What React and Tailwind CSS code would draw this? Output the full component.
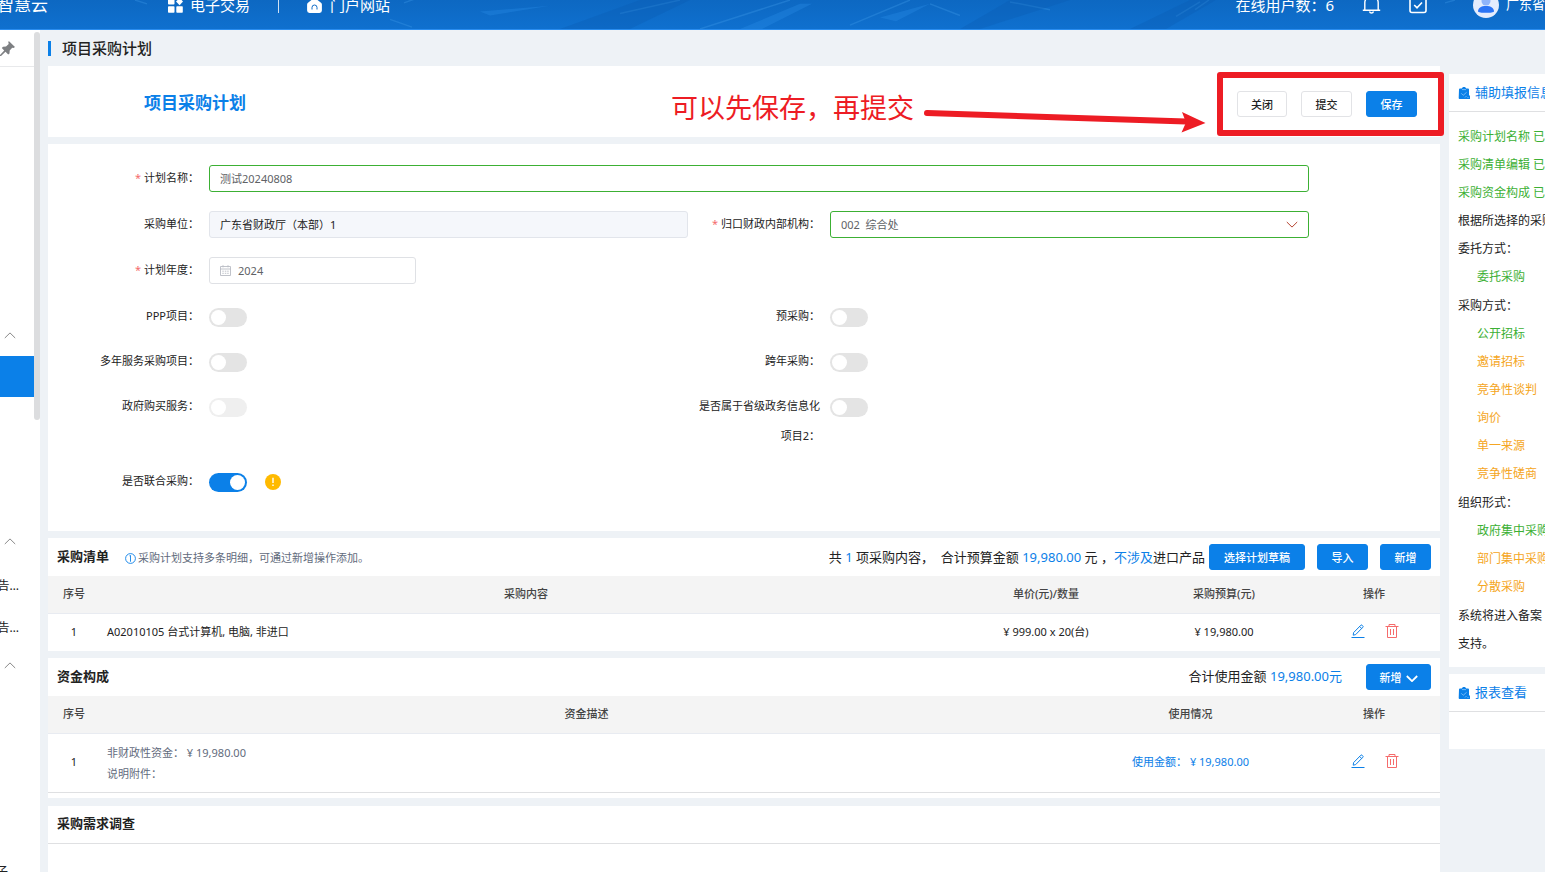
import React from "react";

function Chevron({ className, up, width = 1 }) {
  return (
    <svg className={className} viewBox="0 0 12 7" fill="none" stroke="currentColor" strokeWidth={width} aria-hidden="true">
      <path d={up ? "M0.8 6 6 0.9 11.2 6" : "M0.8 1 6 6.1 11.2 1"} />
    </svg>
  );
}

function EditIcon() {
  return (
    <svg className="h-3.5 w-3.5" viewBox="0 0 14 14" fill="none" stroke="#0b80e8" strokeWidth="1" aria-hidden="true">
      <path d="M0.5 13.5h13" />
      <path d="M2.2 11.2 2.6 8.6 9.9 1.2a.8.8 0 0 1 1.1 0l.9.9a.8.8 0 0 1 0 1.1L4.7 10.6Z" />
      <path d="m8.7 2.5 2 2" />
    </svg>
  );
}

function TrashIcon() {
  return (
    <svg className="h-3.5 w-3.5" viewBox="0 0 14 14" fill="none" stroke="#f56c6c" strokeWidth="1" aria-hidden="true">
      <path d="M0.5 2.5h13M4 2.5v-2h6v2M2.5 2.5v11h9v-11M5.5 5v6M8.5 5v6" />
    </svg>
  );
}

function ClipboardIcon() {
  return (
    <svg className="h-3 w-3 shrink-0" viewBox="0 0 12 12" aria-hidden="true">
      <path d="M2 1.500h1.800C4 .6 4.800 0 6 0s2 .6 2.200 1.500H10a1 1 0 0 1 1 1V8l1 1v3H1.500A1 1 0 0 1 .7 11L1 2.500a1 1 0 0 1 1-1Z" fill="#0b80e8" />
      <path d="M4 2.600h4M3.200 6.300l2 2 3.400-3M7 10.500l1.500-1.500M9.500 10.500h1" stroke="#9fd0fb" strokeWidth=".7" fill="none" />
    </svg>
  );
}

function Button({ primary, className = "w-[51px]", children }) {
  const tone = primary
    ? "border-[#0b80e8] bg-[#0b80e8] text-white"
    : "border-[#e2e3e6] bg-white text-[#222]";
  return (
    <button type="button" className={`flex h-[26px] shrink-0 items-center justify-center gap-1 rounded-[3px] border pt-0.5 text-[11px] font-medium ${tone} ${className}`}>
      {children}
    </button>
  );
}

function Header() {
  return (
    <header className="relative flex h-[30px] shrink-0 items-end overflow-hidden border-b border-[#2a8df0] bg-linear-to-b from-[#0d68c2] to-[#0f70cf] text-[15px] text-white">
      <svg className="absolute inset-0 h-full w-full" viewBox="0 0 1545 30" preserveAspectRatio="none" fill="none" aria-hidden="true">
        <g stroke="#3f9be8" strokeOpacity=".35" strokeWidth="1.500">
          <path d="M135 0l12 4M390 20l22 8M404 3l16-6M620 14l60-14M700 30l90-30M850 26l60-26M930 4l30 12M1010 2l40 8M1176 17l24-15M1195 10l14-10M1445 3l10-3" />
        </g>
        <g fill="#0a5bb0" fillOpacity=".3">
          <path d="M560 30 640 0h50l-60 30ZM960 30l50-30h60l-90 30ZM1130 30l60-30h26l-50 30Z" />
        </g>
        <g fill="#2f93ec" fillOpacity=".3">
          <path d="M480 12l70-6-60 10ZM740 30l60-26 12 0-50 26ZM880 18l50-14-34 18Z" />
        </g>
      </svg>
      <div className="relative flex h-12 w-full shrink-0 items-center whitespace-nowrap">
        <span className="-ml-[3px] w-[171px] shrink-0 text-[17px]">智慧云</span>
        <a href="#trade" className="flex items-center gap-[7px]">
          <svg className="h-[15px] w-[15px]" viewBox="0 0 15 15" fill="#fff" aria-hidden="true">
            <rect x="0" y="0" width="6.500" height="6.500" rx=".8" />
            <rect x="0" y="8.300" width="6.500" height="6.500" rx=".8" />
            <rect x="8.300" y="8.300" width="6.500" height="6.500" rx=".8" />
            <path d="M11.600 7.200 8 3.500 11.600 0l3.500 3.500Z" />
          </svg>
          电子交易
        </a>
        <span className="mx-7 h-4 w-px bg-white/80" />
        <a href="#portal" className="flex items-center gap-2">
          <svg className="h-[15px] w-[15px]" viewBox="0 0 15 15" aria-hidden="true">
            <path d="M6.200.6a2 2 0 0 1 2.600 0l5.200 4.200c.6.500.9 1.100.9 1.800V12.500a2.400 2.400 0 0 1-2.400 2.400H2.500A2.400 2.400 0 0 1 .1 12.500V6.600c0-.7.3-1.300.9-1.800Z" fill="#fff" />
            <path d="M5 11.500V9.500a2.500 2.500 0 0 1 5 0v2" fill="none" stroke="#0e6cc8" strokeWidth="1" />
          </svg>
          门户网站
        </a>
        <span className="ml-auto">在线用户数：6</span>
        <button type="button" aria-label="消息" className="ml-7">
          <svg className="h-[19px] w-[19px]" viewBox="0 0 19 19" fill="none" stroke="#fff" strokeWidth="1.400" aria-hidden="true">
            <path d="M.8 14.200h17.400M2.800 14V6.800a6.700 6.700 0 0 1 13.400 0V14M7.500 15.500a2.100 2.100 0 0 0 4 0" />
          </svg>
        </button>
        <button type="button" aria-label="待办" className="ml-7">
          <svg className="h-[18px] w-[18px]" viewBox="0 0 18 18" fill="none" stroke="#fff" strokeWidth="1.600" aria-hidden="true">
            <path d="M1 2.500h16v12a2 2 0 0 1-2 2H3a2 2 0 0 1-2-2ZM5.200 9l2.800 2.800 5-5.300" />
          </svg>
        </button>
        <a href="#user" className="ml-[46px] flex w-[72px] items-center gap-[7px] overflow-hidden text-[13px]">
          <svg className="h-[26px] w-[26px] shrink-0" viewBox="0 0 26 26" aria-hidden="true">
            <circle cx="13" cy="13" r="13" fill="#e4ecfd" />
            <circle cx="13" cy="9" r="4.500" fill="#8fb4fb" />
            <path d="M5 19.500c0-3.500 3-5.500 8-5.500s8 2 8 5.500c0 1.800-16 1.800-16 0Z" fill="#2b74f5" />
          </svg>
          广东省
        </a>
      </div>
    </header>
  );
}

function SideMenu() {
  return (
    <nav aria-label="菜单" className="flex w-10 shrink-0 overflow-hidden bg-white">
      <div className="flex w-[34px] shrink-0 flex-col text-[12px] text-[#222]">
        <div className="flex h-[37px] shrink-0 items-center border-b border-[#e8e9eb]">
          <svg className="h-[15px] w-[15px]" viewBox="0 0 15 15" fill="#7d7f82" aria-hidden="true">
            <path d="M8.800 0 15 6l-1.500 1-1.300-.3-2.500 2.800-.2 3L8.200 13.500 5.500 10.800 1 15H0v-1l4.200-4.500L1.800 7 3 5.700l3-.2L8.700 3 8.300 1.300Z" />
          </svg>
        </div>
        <div className="mt-[252px] flex h-8 shrink-0 items-center pl-1"><Chevron up className="h-[7px] w-3 text-[#888]" /></div>
        <a href="#plan" aria-label="项目采购计划" aria-current="page" className="mt-[5px] h-[41px] shrink-0 bg-[#0b80e8]" />
        <div className="mt-32 flex h-8 shrink-0 items-center pl-1"><Chevron up className="h-[7px] w-3 text-[#888]" /></div>
        <a href="#notice-a" className="mt-2 flex h-[42px] shrink-0 items-center justify-end overflow-hidden whitespace-nowrap pr-[15px]">告…</a>
        <a href="#notice-b" className="flex h-[42px] shrink-0 items-center justify-end overflow-hidden whitespace-nowrap pr-[15px]">告…</a>
        <div className="flex h-8 shrink-0 items-center pl-1"><Chevron up className="h-[7px] w-3 text-[#888]" /></div>
        <a href="#more" className="mt-[170px] flex h-[42px] shrink-0 items-center justify-end pr-[26px]">子</a>
      </div>
      <div className="mt-0.5 h-[388px] w-1.5 rounded-full bg-[#dcdddf]" />
    </nav>
  );
}

function Field({ label, id, required, wide, children }) {
  return (
    <div className={`flex items-start ${wide ? "col-span-2" : ""}`}>
      <label htmlFor={id} className="mr-2.5 w-[132px] shrink-0 pl-2 text-right leading-[30px] text-[#222]">
        {required && <span className="mr-[3px] text-[#f56c6c]">*</span>}
        {label}：
      </label>
      <div className="flex min-w-0 flex-1">{children}</div>
    </div>
  );
}

function Switch({ id, on, disabled }) {
  return (
    <input
      id={id}
      type="checkbox"
      role="switch"
      defaultChecked={on}
      disabled={disabled}
      className="mt-[7px] flex h-[19px] w-[38px] shrink-0 appearance-none items-center rounded-full bg-[#e4e4e4] px-0.5 before:block before:h-[15px] before:w-[15px] before:rounded-full before:bg-white before:content-[''] checked:justify-end checked:bg-[#0b80e8] disabled:bg-[#efefef]"
    />
  );
}

function TitlePanel() {
  return (
    <section className="relative flex h-[71px] items-center bg-white pl-24 pr-[23px]">
      <h1 className="mt-0.5 text-[17px] font-bold text-[#0b80e8]">项目采购计划</h1>
      <div className="absolute right-[234px] top-6 flex items-start whitespace-nowrap">
        <span className="mr-2.5 text-[27px] leading-9 text-[#ed1c24]">可以先保存，再提交</span>
        <svg className="mt-[19px] h-[26px] w-[282px]" viewBox="0 0 282 26" aria-hidden="true">
          <path d="M3 4 262 12.500" stroke="#ed1c24" strokeWidth="6" strokeLinecap="round" />
          <path d="M258 3 281.500 14 257.500 23.500 262 13.500Z" fill="#ed1c24" />
        </svg>
      </div>
      <div className="relative ml-auto mt-[5px] flex gap-[14px]">
        <Button className="w-[50px]">关闭</Button>
        <Button>提交</Button>
        <Button primary>保存</Button>
        <div className="pointer-events-none absolute -bottom-[19px] -left-5 -right-[27px] -top-[19px] z-10 rounded-[3px] border-6 border-[#ed1c24]" />
      </div>
    </section>
  );
}

function PlanForm() {
  const box = "h-[27px] w-full rounded-[3px] border px-2.5 text-[11px] outline-none";
  return (
    <form className="mt-[7px] bg-white pb-[35px] pl-[19px] pr-[131px] pt-[19px] text-[11px]">
      <div className="grid grid-cols-2 gap-y-4">
        <Field label="计划名称" id="name" required wide>
          <input id="name" defaultValue="测试20240808" className={`${box} mt-0.5 border-[#3cb034] pb-0.5 text-[#606266]`} />
        </Field>
        <Field label="采购单位" id="unit">
          <input id="unit" readOnly value="广东省财政厅（本部）1" className={`${box} mt-0.5 border-[#e2e5eb] bg-[#f5f7fb] pb-0.5 text-[#222]`} />
        </Field>
        <Field label="归口财政内部机构" id="org" required>
          <div className="relative mt-0.5 flex w-full items-center">
            <select id="org" className={`${box} appearance-none border-[#3cb034] bg-white pt-0.5 text-[#606266]`}>
              <option>{"002\u00a0 综合处"}</option>
            </select>
            <Chevron className="pointer-events-none absolute right-[11px] h-[7px] w-3 text-[#b5432f]" />
          </div>
        </Field>
        <Field label="计划年度" id="year" required wide>
          <div className="mt-0.5 flex h-[27px] w-[207px] items-center gap-[7px] rounded-[3px] border border-[#dfe1e5] px-2.5">
            <svg className="h-[11px] w-[11px] shrink-0" viewBox="0 0 11 11" fill="none" stroke="#b9bcc4" strokeWidth=".9" aria-hidden="true">
              <path d="M.5 1.500h10v9H.5ZM.5 4h10M3 .2v2.200M8 .2v2.200M2.300 6.200h1.500M4.800 6.200h1.500M7.200 6.200h1.500M2.300 8.300h1.500M4.800 8.300h1.500M7.200 8.300h1.500" />
            </svg>
            <input id="year" defaultValue="2024" className="w-full min-w-0 pt-0.5 text-[#606266] outline-none" />
          </div>
        </Field>
      </div>
      <div className="mt-4 grid grid-cols-2 gap-y-[15px]">
        <Field label="PPP项目" id="ppp"><Switch id="ppp" /></Field>
        <Field label="预采购" id="pre"><Switch id="pre" /></Field>
        <Field label="多年服务采购项目" id="multi"><Switch id="multi" /></Field>
        <Field label="跨年采购" id="cross"><Switch id="cross" /></Field>
        <Field label="政府购买服务" id="service"><Switch id="service" disabled /></Field>
        <Field label="是否属于省级政务信息化项目2" id="it"><Switch id="it" /></Field>
        <Field label="是否联合采购" id="joint" wide>
          <Switch id="joint" on />
          <svg className="ml-[18px] mt-2 h-4 w-4" viewBox="0 0 16 16" aria-hidden="true">
            <circle cx="8" cy="8" r="8" fill="#ffba00" />
            <path d="M8 3.800v5.200M8 10.500v1.600" stroke="#fff" strokeWidth="1.400" />
          </svg>
        </Field>
      </div>
    </form>
  );
}

function HeadRow({ columns }) {
  return (
    <thead>
      <tr className="h-[37px] border-b border-[#e8ebf1] bg-[#f4f4f4] text-[#444]">
        {columns.map((c) => (
          <th key={c} scope="col" className="p-0 text-center font-medium">{c}</th>
        ))}
      </tr>
    </thead>
  );
}

function RowActions() {
  return (
    <div className="flex items-center justify-center gap-5 pb-[3px] pl-px">
      <button type="button" aria-label="编辑"><EditIcon /></button>
      <button type="button" aria-label="删除"><TrashIcon /></button>
    </div>
  );
}

function ItemList() {
  return (
    <section className="mt-[7px] bg-white">
      <div className="flex h-[38px] items-center whitespace-nowrap pl-[9px] pr-[9px]">
        <h2 className="text-[13px] font-bold text-[#222]">采购清单</h2>
        <p className="ml-4 mt-0.5 flex items-center gap-0.5 text-[11px] text-[#626b7c]">
          <svg className="h-[11px] w-[11px]" viewBox="0 0 11 11" fill="none" stroke="#0b80e8" strokeWidth=".9" aria-hidden="true">
            <circle cx="5.500" cy="5.500" r="4.900" />
            <path d="M5.500 2.300v6.400M4.500 2.800h1" />
          </svg>
          采购计划支持多条明细，可通过新增操作添加。
        </p>
        <p className="ml-auto mr-1 pt-0.5 text-[13px] text-[#222]">
          共 <span className="text-[#0b80e8]">1</span> 项采购内容，{"\u00a0 "}合计预算金额 <span className="text-[#0b80e8]">19,980.00</span> 元 ，<span className="text-[#0b80e8]">不涉及</span>进口产品
        </p>
        <div className="flex gap-3">
          <Button primary className="w-24">选择计划草稿</Button>
          <Button primary>导入</Button>
          <Button primary>新增</Button>
        </div>
      </div>
      <table className="w-full table-fixed border-collapse text-[11px] text-[#222]">
        <colgroup>
          <col className="w-[52px]" />
          <col />
          <col className="w-[188px]" />
          <col className="w-[168px]" />
          <col className="w-[132px]" />
        </colgroup>
        <HeadRow columns={["序号", "采购内容", "单价(元)/数量", "采购预算(元)", "操作"]} />
        <tbody>
          <tr className="h-[38px] text-center">
            <td>1</td>
            <td className="pl-[7px] text-left">A02010105 台式计算机, 电脑, 非进口</td>
            <td>¥ 999.00 x 20(台)</td>
            <td>¥ 19,980.00</td>
            <td><RowActions /></td>
          </tr>
        </tbody>
      </table>
    </section>
  );
}

function FundList() {
  return (
    <section className="mt-[7px] bg-white pb-[5px]">
      <div className="flex h-[38px] items-center whitespace-nowrap pl-[9px] pr-[9px]">
        <h2 className="text-[13px] font-bold text-[#222]">资金构成</h2>
        <p className="ml-auto mr-6 text-[13px] text-[#222]">
          合计使用金额 <span className="text-[#0b80e8]">19,980.00元</span>
        </p>
        <Button primary className="w-[65px]">
          新增
          <Chevron className="h-[7px] w-3" width={1.8} />
        </Button>
      </div>
      <table className="w-full table-fixed border-collapse text-[11px] text-[#222]">
        <colgroup>
          <col className="w-[52px]" />
          <col />
          <col className="w-[235px]" />
          <col className="w-[132px]" />
        </colgroup>
        <HeadRow columns={["序号", "资金描述", "使用情况", "操作"]} />
        <tbody>
          <tr className="h-[59px] border-b border-[#dfe0e2] text-center">
            <td>1</td>
            <td className="pl-[7px] text-left leading-[21px] text-[#626b7c]">
              <p>非财政性资金： ¥ 19,980.00</p>
              <p>说明附件：</p>
            </td>
            <td className="text-[#0b80e8]">使用金额： ¥ 19,980.00</td>
            <td><RowActions /></td>
          </tr>
        </tbody>
      </table>
    </section>
  );
}

function AsideHeading({ children }) {
  return (
    <h2 className="flex h-[38px] items-center gap-[5px] border-b border-[#dfe0e2] pl-[9px] text-[13px] text-[#0b80e8]">
      <ClipboardIcon />
      {children}
    </h2>
  );
}

function OptionList({ items }) {
  return (
    <ul className="mb-px pl-[19px]">
      {items.map(([text, allowed]) => (
        <li key={text} className={allowed ? "text-[#3cb034]" : "text-[#f5a623]"}>{text}</li>
      ))}
    </ul>
  );
}

function HelpAside() {
  return (
    <aside className="ml-[9px] w-24 shrink-0 overflow-hidden whitespace-nowrap pt-11">
      <section className="bg-white">
        <AsideHeading>辅助填报信息</AsideHeading>
        <div className="pb-[9px] pl-[9px] pt-[11px] text-[12px] leading-7 text-[#222]">
          <p className="text-[#3cb034]">采购计划名称 已</p>
          <p className="text-[#3cb034]">采购清单编辑 已</p>
          <p className="text-[#3cb034]">采购资金构成 已</p>
          <p>根据所选择的采购</p>
          <p>委托方式：</p>
          <OptionList items={[["委托采购", true]]} />
          <p>采购方式：</p>
          <OptionList items={[["公开招标", true], ["邀请招标", false], ["竞争性谈判", false], ["询价", false], ["单一来源", false], ["竞争性磋商", false]]} />
          <p>组织形式：</p>
          <OptionList items={[["政府集中采购", true], ["部门集中采购", false], ["分散采购", false]]} />
          <p>系统将进入备案</p>
          <p>支持。</p>
        </div>
      </section>
      <section className="mt-[7px] bg-white pb-[37px]">
        <AsideHeading>报表查看</AsideHeading>
      </section>
    </aside>
  );
}

export default function App() {
  return (
    <div className="flex h-screen flex-col overflow-hidden bg-[#eef2f6] font-['Noto_Sans','Noto_Sans_CJK_SC',sans-serif]">
      <Header />
      <div className="flex min-h-0 flex-1">
        <SideMenu />
        <div className="flex min-w-0 flex-1 overflow-hidden pl-2">
          <main className="flex min-w-0 flex-1 flex-col">
            <div className="flex h-9 shrink-0 items-center">
              <span className="h-[15px] w-[3px] bg-[#0b80e8]" />
              <span className="ml-[11px] text-[15px] font-medium text-[#222]">项目采购计划</span>
            </div>
            <TitlePanel />
            <PlanForm />
            <ItemList />
            <FundList />
            <section className="mt-2 flex-1 bg-white">
              <h2 className="flex h-[38px] items-center border-b border-[#dfe0e2] pl-[9px] text-[13px] font-bold text-[#222]">采购需求调查</h2>
            </section>
          </main>
          <HelpAside />
        </div>
      </div>
    </div>
  );
}
